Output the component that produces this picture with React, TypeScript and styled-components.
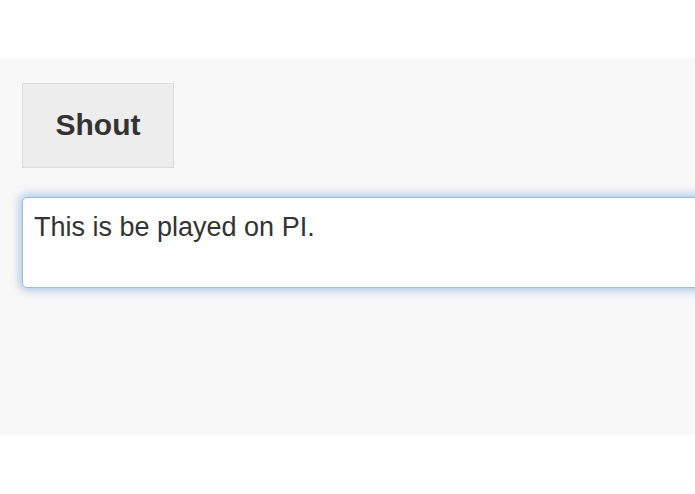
import React from "react";
import styled, { createGlobalStyle } from "styled-components";

const Global = createGlobalStyle`
  html, body { margin: 0; padding: 0; background: #ffffff; }
  body { font-family: "Liberation Sans", Arial, sans-serif; overflow: hidden; }
`;

const Page = styled.div`
  width: 695px;
  height: 494px;
  padding-top: 58px;
  box-sizing: border-box;
  background: #ffffff;
`;

const Panel = styled.section`
  height: 377px;
  background: #f8f8f8;
  padding: 25px 0 0 22px;
  box-sizing: border-box;
  display: flex;
  flex-direction: column;
  align-items: flex-start;
  gap: 29px;
  overflow: hidden;
`;

const Button = styled.button`
  width: 152px;
  height: 85px;
  box-sizing: border-box;
  background: #ededed;
  border: 1px solid #dcdcdc;
  border-radius: 0;
  font-family: "Liberation Sans", Arial, sans-serif;
  font-weight: bold;
  font-size: 30px;
  color: #333333;
  padding: 0 0 2px 0;
`;

const TextBox = styled.textarea`
  width: 720px;
  height: 91px;
  box-sizing: border-box;
  border: 1px solid #9dbddd;
  border-radius: 5px;
  background: #ffffff;
  box-shadow: 0 0 8px 3px rgba(110, 160, 215, 0.5);
  font-family: "Liberation Sans", Arial, sans-serif;
  font-size: 27px;
  color: #333333;
  padding: 13px 11px;
  line-height: 32px;
  resize: none;
  outline: none;
`;

export default function App() {
  return (
    <Page>
      <Global />
      <Panel>
        <Button>Shout</Button>
        <TextBox defaultValue="This is be played on PI." />
      </Panel>
    </Page>
  );
}
